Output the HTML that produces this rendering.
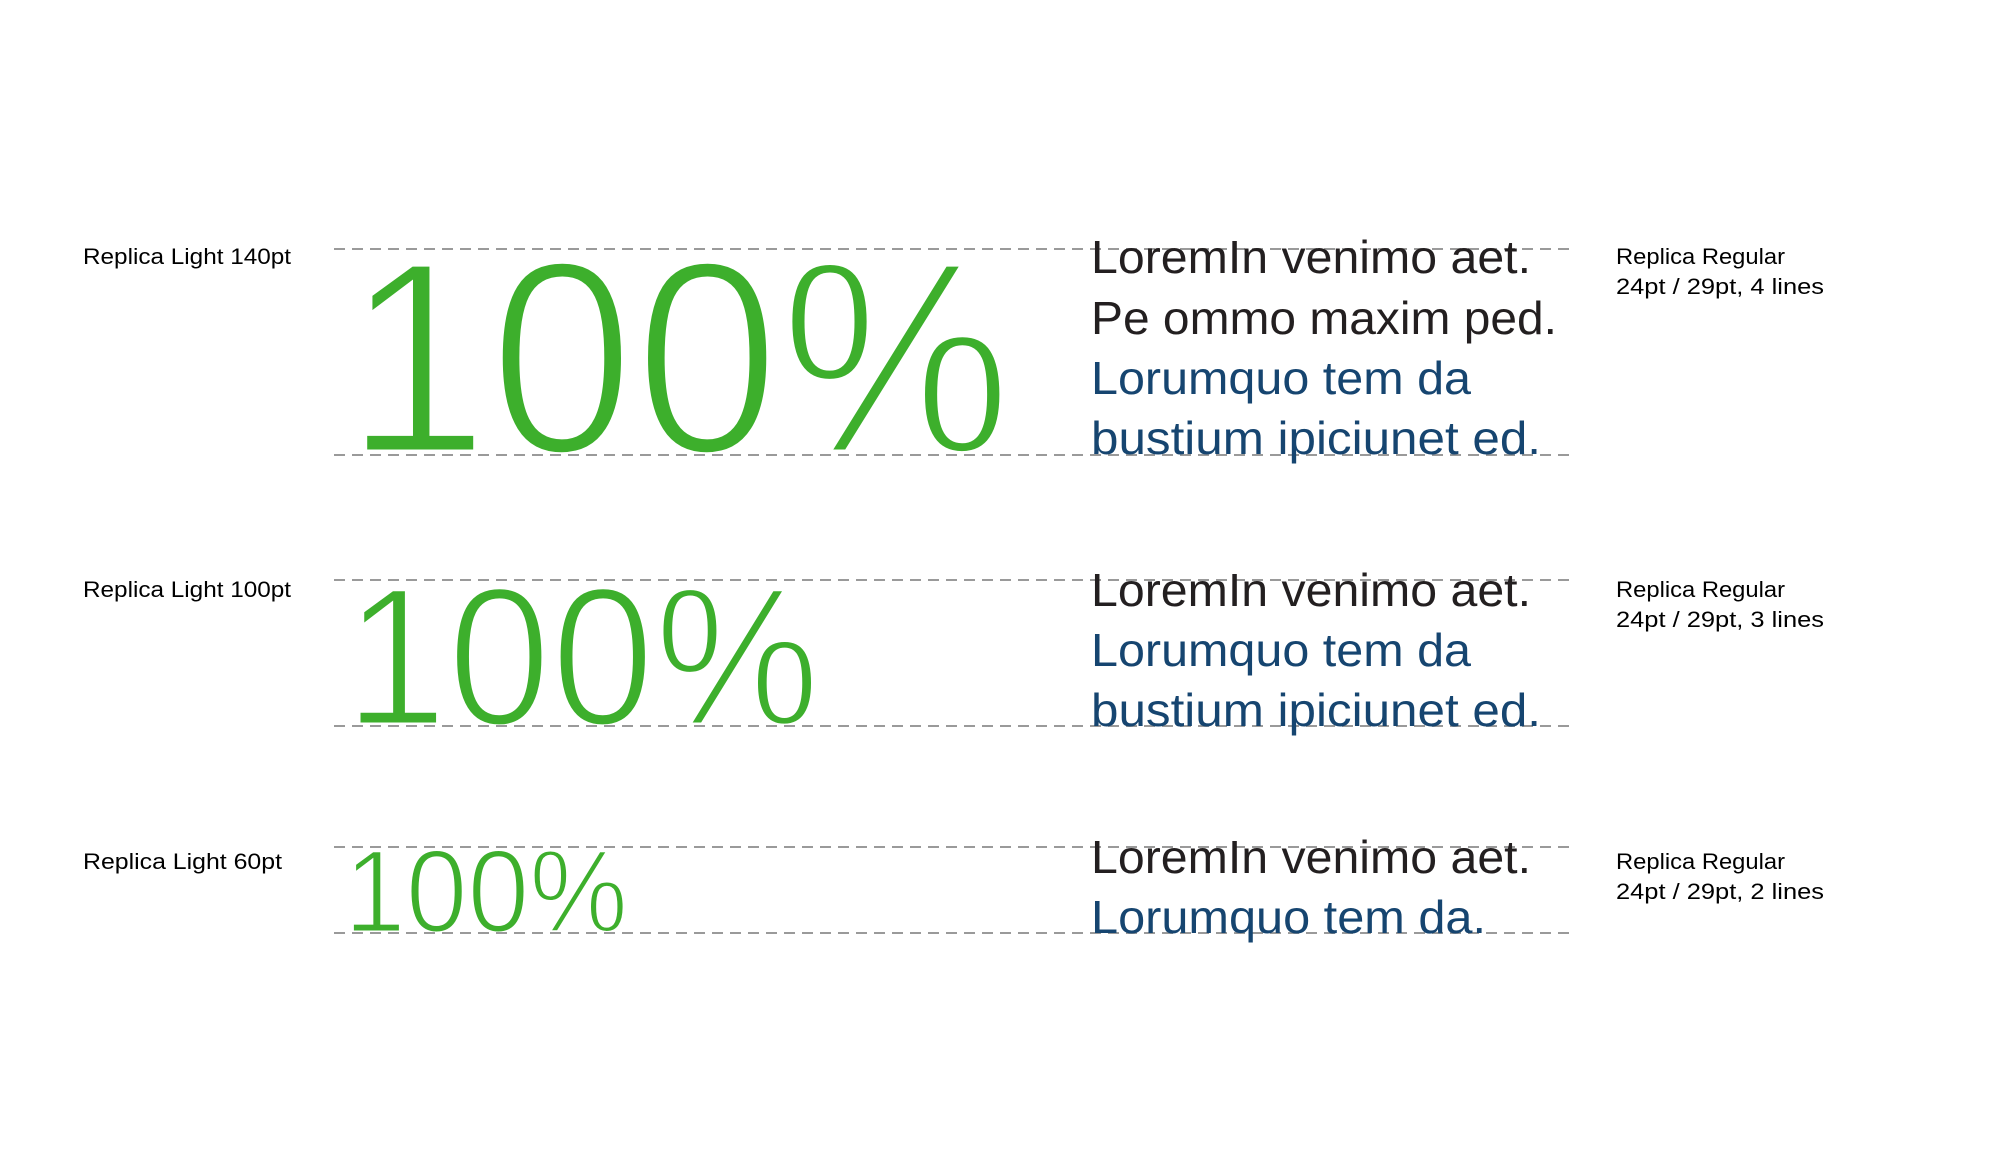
<!DOCTYPE html>
<html><head><meta charset="utf-8"><style>html,body{margin:0;padding:0;background:#fff;}svg{display:block}</style></head>
<body>
<svg width="2000" height="1167" viewBox="0 0 2000 1167" xmlns="http://www.w3.org/2000/svg" font-family="Liberation Sans, sans-serif">
<g fill="#3daf2c" stroke="#fff">
<text x="344" y="453" font-size="276" stroke-width="7" textLength="668" lengthAdjust="spacingAndGlyphs">100%</text>
<text x="344" y="725" font-size="198" stroke-width="5" textLength="476" lengthAdjust="spacingAndGlyphs">100%</text>
<text x="344" y="932" font-size="118" stroke-width="3" textLength="284" lengthAdjust="spacingAndGlyphs">100%</text>
</g>
<g stroke="#9a9a9a" stroke-width="2" stroke-dasharray="11 7">
<line x1="334" y1="249" x2="1569" y2="249"/>
<line x1="334" y1="455" x2="1569" y2="455"/>
<line x1="334" y1="580" x2="1569" y2="580"/>
<line x1="334" y1="726" x2="1569" y2="726"/>
<line x1="334" y1="847" x2="1569" y2="847"/>
<line x1="334" y1="933" x2="1569" y2="933"/>
</g>
<g fill="#000" font-size="22">
<text x="83" y="264" textLength="208" lengthAdjust="spacingAndGlyphs">Replica Light 140pt</text>
<text x="83" y="597" textLength="208" lengthAdjust="spacingAndGlyphs">Replica Light 100pt</text>
<text x="83" y="869" textLength="199" lengthAdjust="spacingAndGlyphs">Replica Light 60pt</text>
<text x="1616" y="264" textLength="169" lengthAdjust="spacingAndGlyphs">Replica Regular</text>
<text x="1616" y="294" textLength="208" lengthAdjust="spacingAndGlyphs">24pt / 29pt, 4 lines</text>
<text x="1616" y="597" textLength="169" lengthAdjust="spacingAndGlyphs">Replica Regular</text>
<text x="1616" y="627" textLength="208" lengthAdjust="spacingAndGlyphs">24pt / 29pt, 3 lines</text>
<text x="1616" y="869" textLength="169" lengthAdjust="spacingAndGlyphs">Replica Regular</text>
<text x="1616" y="899" textLength="208" lengthAdjust="spacingAndGlyphs">24pt / 29pt, 2 lines</text>
</g>
<g font-size="46">
<text x="1091" y="273" fill="#231f20" textLength="440" lengthAdjust="spacingAndGlyphs">LoremIn venimo aet.</text>
<text x="1091" y="334" fill="#231f20" textLength="466" lengthAdjust="spacingAndGlyphs">Pe ommo maxim ped.</text>
<text x="1091" y="394" fill="#164570" textLength="380" lengthAdjust="spacingAndGlyphs">Lorumquo tem da</text>
<text x="1091" y="454" fill="#164570" textLength="450" lengthAdjust="spacingAndGlyphs">bustium ipiciunet ed.</text>
<text x="1091" y="606" fill="#231f20" textLength="440" lengthAdjust="spacingAndGlyphs">LoremIn venimo aet.</text>
<text x="1091" y="666" fill="#164570" textLength="380" lengthAdjust="spacingAndGlyphs">Lorumquo tem da</text>
<text x="1091" y="726" fill="#164570" textLength="450" lengthAdjust="spacingAndGlyphs">bustium ipiciunet ed.</text>
<text x="1091" y="873" fill="#231f20" textLength="440" lengthAdjust="spacingAndGlyphs">LoremIn venimo aet.</text>
<text x="1091" y="933" fill="#164570" textLength="395" lengthAdjust="spacingAndGlyphs">Lorumquo tem da.</text>
</g>
</svg>
</body></html>
